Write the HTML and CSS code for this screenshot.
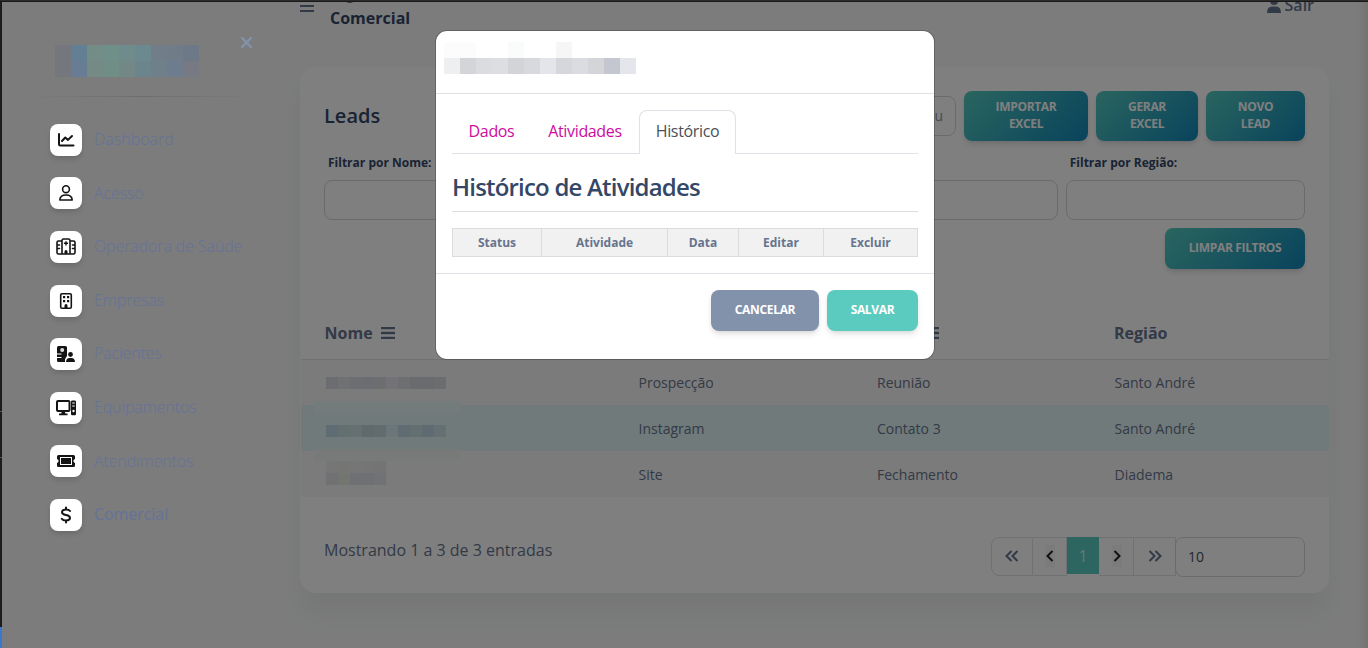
FILE: index.html
```html
<!DOCTYPE html>
<html lang="pt-BR">
<head>
<meta charset="utf-8">
<title>Leads</title>
<link rel="stylesheet" href="styles.css">
</head>
<body>
<div class="app">
  <aside class="sidebar">
    <div class="brand">
      <div class="logo">
        <i style="background:#75777f"></i><i style="background:#637f94"></i><i style="background:#738c86"></i><i style="background:#6f9088"></i><i style="background:#6f8b8c"></i><i style="background:#6c898f"></i><i style="background:#717e8a"></i><i style="background:#717c89"></i><i style="background:#6e7988"></i>
        <i style="background:#75777f"></i><i style="background:#687c94"></i><i style="background:#758985"></i><i style="background:#708d86"></i><i style="background:#728786"></i><i style="background:#6c858c"></i><i style="background:#70808a"></i><i style="background:#6d7d8d"></i><i style="background:#777983"></i>
      </div>
      <svg class="close" viewBox="0 0 10 10"><path d="M1 1l8 8M9 1l-8 8"/></svg>
    </div>
    <div class="divider"></div>
    <nav class="menu">
      <a class="item"><span class="tile"><svg viewBox="0 0 20 20"><path class="ln thick" d="M3 4v10.200q0 1.300 1.300 1.300H17.500M6 11l3.300-3.500 2.700 2.400L16 6"/></svg></span><span class="label">Dashboard</span></a>
      <a class="item"><span class="tile"><svg viewBox="0 0 20 20"><circle class="ln" cx="10" cy="6.200" r="3.400"/><path class="ln" d="M3.800 17q.2-5 6.200-5t6.200 5z"/></svg></span><span class="label">Acesso</span></a>
      <a class="item"><span class="tile"><svg viewBox="0 0 20 20"><path class="ln" d="M6 17V3.500Q6 2 7.500 2h5Q14 2 14 3.500V17zM6 4H2.500Q1 4 1 5.500v10Q1 17 2.500 17H6M14 4h3.500Q19 4 19 5.500v10q0 1.500-1.500 1.500H14M1 8h2.500M1 11.500h2.500M16.500 8H19M16.500 11.500H19"/><path d="M8.500 17v-2.500q0-1.500 1.500-1.500t1.500 1.500V17zM9.300 4.200h1.400v1.400h1.400V7h-1.400v1.400H9.300V7H7.900V5.600h1.400z"/></svg></span><span class="label">Operadora de Saúde</span></a>
      <a class="item"><span class="tile"><svg viewBox="0 0 20 20"><rect class="ln" x="4.700" y="2.700" width="10.600" height="14.600" rx="1.300"/><path d="M7 5h2.200v2.200H7zM11 5h2.200v2.200H11zM7 9h2.200v2.200H7zM11 9h2.200v2.200H11zM8.500 17.500v-3q0-1.500 1.500-1.500t1.500 1.500v3z"/></svg></span><span class="label">Empresas</span></a>
      <a class="item"><span class="tile"><svg viewBox="0 0 20 20"><path d="M2.500 2h7Q11 2 11 3.500V12q-1.500 1.500-2 3.500v2.500H2.500Q1 18 1 16.500V14h4.500v-1H1v-2.500h4.500v-1H1v-6Q1 2 2.500 2z"/><circle cx="6.200" cy="6" r="2" fill="#ddd"/><circle cx="14.500" cy="10.500" r="2.400"/><path d="M10 18q.3-4 3.500-4h2q3.300 0 3.500 4z"/></svg></span><span class="label">Pacientes</span></a>
      <a class="item"><span class="tile"><svg viewBox="0 0 20 20"><rect class="ln thick" x="1" y="3" width="12.500" height="10" rx="1"/><path d="M5.800 13.500h3l.5 2h2.200v1.800H3v-1.800h2.200z"/><rect x="15" y="2.500" width="5" height="14.800" rx="1.200"/><path d="M16.200 5h2.600M16.200 8h2.600" stroke="#fff" stroke-width="1"/><circle cx="17.500" cy="13" r="1.200" fill="#fff"/></svg></span><span class="label">Equipamentos</span></a>
      <a class="item"><span class="tile"><svg viewBox="0 0 20 20"><path d="M2.500 4h15Q19 4 19 5.500V8q-1.600.5-1.600 2t1.600 2v2.500q0 1.500-1.500 1.500h-15Q1 16 1 14.500V12q1.600-.5 1.600-2T1 8V5.500Q1 4 2.500 4z"/><rect x="4.500" y="6.500" width="11" height="7" fill="none" stroke="#fff"/></svg></span><span class="label">Atendimentos</span></a>
      <a class="item active"><span class="tile"><svg viewBox="0 0 20 20"><path class="ln thick" d="M14 6Q13 4.500 10 4.500q-4 0-4 2.800Q6 9.300 10 10q4 .7 4 3t-4 2.500q-3.200 0-4.200-1.700M10 2.500v2M10 15.500v2"/></svg></span><span class="label">Comercial</span></a>
    </nav>
  </aside>

  <main class="content">
    <header class="topbar">
      <svg class="burger" viewBox="0 0 14 12"><path d="M0 1h14M0 6h14M0 11h14"/></svg>
      <div class="crumbs"><span>Páginas</span><b>Comercial</b></div>
      <div class="logout"><svg viewBox="0 0 14 16"><circle cx="7" cy="4" r="4"/><path d="M0 16q0-6.500 5-6.500h4q5 0 5 6.500z"/></svg>Sair</div>
    </header>

    <section class="card">
      <div class="card-head">
        <h5>Leads</h5>
        <div class="search">Digite seu</div>
        <button class="btn grad import">IMPORTAR<br>EXCEL</button>
        <button class="btn grad gen">GERAR<br>EXCEL</button>
        <button class="btn grad new">NOVO<br>LEAD</button>
      </div>
      <div class="filters">
        <label>Filtrar por Nome:<span class="field"></span></label>
        <label>Filtrar por Origem:<span class="field"></span></label>
        <label>Filtrar por Status:<span class="field"></span></label>
        <label>Filtrar por Região:<span class="field"></span></label>
      </div>
      <button class="btn grad clear">LIMPAR FILTROS</button>

      <div class="table">
        <div class="row thead"><span>Nome <svg class="sort" viewBox="0 0 14 12"><path d="M0 1h14M0 6h14M0 11h14"/></svg></span><span>Origem</span><span>Status<svg class="sort st" viewBox="0 0 14 12"><path d="M0 1h14M0 6h14M0 11h14"/></svg></span><span>Região</span></div>
        <div class="row odd"><span class="mask m1"><i style="background:#6c6d70"></i><i style="background:#707173"></i><i style="background:#6d6e72"></i><i style="background:#6b6d73"></i><i style="background:#6d6e70"></i><i style="background:#737377"></i><i style="background:#6d6f71"></i><i style="background:#696b6e"></i><i style="background:#696b6f"></i><i style="background:#6b6d6f"></i></span><span>Prospecção</span><span>Reunião</span><span>Santo André</span></div>
        <div class="row sel"><span class="mask m2"><i style="background:#606c73"></i><i style="background:#63706f"></i><i style="background:#657171"></i><i style="background:#606a6c"></i><i style="background:#626c6f"></i><i style="background:#6a7678"></i><i style="background:#606b72"></i><i style="background:#637071"></i><i style="background:#606a72"></i><i style="background:#647071"></i></span><span>Instagram</span><span>Contato 3</span><span>Santo André</span></div>
        <div class="row odd"><span class="mask m3"><i style="background:#767676"></i><i style="background:#757674"></i><i style="background:#757675"></i><i style="background:#737674"></i><i style="background:#747474"></i><i style="background:#717174"></i><i style="background:#727570"></i><i style="background:#6e7073"></i><i style="background:#6e7074"></i><i style="background:#717276"></i></span><span>Site</span><span>Fechamento</span><span>Diadema</span></div>
      </div>

      <div class="card-foot">
        <span class="info">Mostrando 1 a 3 de 3 entradas</span>
        <div class="pages">
          <span class="pg first"><svg viewBox="0 0 14 12"><path d="M6.500 1l-5 5 5 5M12.500 1l-5 5 5 5"/></svg></span>
          <span class="pg step"><em><svg viewBox="0 0 8 12"><path d="M6.500 1l-5 5 5 5"/></svg></em></span>
          <span class="pg now">1</span>
          <span class="pg step next"><em><svg viewBox="0 0 8 12"><path d="M1.500 1l5 5-5 5"/></svg></em></span>
          <span class="pg last"><svg viewBox="0 0 14 12"><path d="M1.500 1l5 5-5 5M7.500 1l5 5-5 5"/></svg></span>
          <span class="size">10</span>
        </div>
      </div>
    </section>
  </main>

  <div class="backdrop"></div>

  <div class="modal">
    <div class="modal-head">
      <div class="name">
        <i style="background:#fcfcfd"></i><i style="background:#fcfcfd"></i><i></i><i></i><i style="background:#fafcfc"></i><i></i><i></i><i style="background:#f6f6f7"></i><i></i><i></i><i></i><i></i>
        <i style="background:#eeeff1"></i><i style="background:#d4d5d9"></i><i style="background:#dbdce0"></i><i style="background:#dddee2"></i><i style="background:#d3d4d8"></i><i style="background:#d8d9dd"></i><i style="background:#e4e5ea"></i><i style="background:#d6d7db"></i><i style="background:#dbdce1"></i><i style="background:#d3d5d9"></i><i style="background:#c4c7d0"></i><i style="background:#e5e6eb"></i>
      </div>
    </div>
    <div class="modal-body">
      <div class="tabs"><a class="t1">Dados</a><a class="t2">Atividades</a><a class="t3 on">Histórico</a></div>
      <h4>Histórico de Atividades</h4>
      <div class="hist"><span>Status</span><span>Atividade</span><span>Data</span><span>Editar</span><span>Excluir</span></div>
    </div>
    <div class="modal-foot">
      <button class="btn cancel">CANCELAR</button>
      <button class="btn save">SALVAR</button>
    </div>
  </div>
  <div class="edge-top"></div>
  <div class="edge-left"></div>
</div>
</body>
</html>
```

FILE: styles.css
```css
* { box-sizing: border-box; }
body {
  margin: 0;
  background: #f8f9fa;
  font-family: "Open Sans", sans-serif;
  font-size: 16px;
  color: #67748e;
}
.app {
  position: relative;
  display: flex;
  width: 1368px;
  height: 648px;
  overflow: hidden;
}
.backdrop { position: absolute; inset: 0; background: rgba(0, 0, 0, .5); box-shadow: inset -14px 0 12px -12px rgba(0, 0, 0, .12); z-index: 1; }
.edge-top { position: absolute; left: 0; right: 0; top: 0; height: 2px; background: linear-gradient(#2c2c2c 50%, #191919 50%); z-index: 5; }
.edge-left { position: absolute; left: 0; top: 2px; bottom: 0; width: 2px; background: linear-gradient(#1c1c1c 409px, #555 409px 410px, #1c1c1c 410px 455px, #555 455px 456px, #1c1c1c 456px 625px, #3a78d0 625px); z-index: 5; }

/* sidebar */
.sidebar { position: relative; z-index: 2; width: 284px; flex: none; }
.brand { display: flex; height: 96px; padding: 45px 0 0 55px; }
.logo { display: grid; grid-template-columns: repeat(9, 16px); grid-auto-rows: 16px; height: 32px; }
.close { width: 11px; height: 11px; margin: -8px 0 0 42px; fill: none; stroke: #8392ab; stroke-width: 2; stroke-linecap: round; }
.divider { height: 1px; margin: 0 26px; background: linear-gradient(90deg, transparent, #6e6e6e 50%, transparent); }
.menu { padding: 16px 32px 0 34px; }
.item { display: flex; align-items: center; height: 53.600px; padding-left: 16px; }
.tile { display: flex; align-items: center; justify-content: center; width: 32px; height: 32px; margin-right: 12px; border-radius: 8px; background: #fff; box-shadow: 0 4px 6px -1px rgba(20,20,20,.12), 0 2px 4px -1px rgba(20,20,20,.07); }
.tile svg { width: 20px; height: 20px; fill: #141414; }
.tile .ln { fill: none; stroke: #141414; stroke-width: 1.600; stroke-linecap: round; stroke-linejoin: round; }
.tile .thick { stroke-width: 2; }
.label { color: #647299; font-weight: 300; line-height: 24px; margin-top: -1.600px; letter-spacing: -.12px; }
.item:first-child .label { letter-spacing: 0; }
.active .label { font-weight: 400; letter-spacing: -.06px; }

/* page behind the dialog */
.content { flex: 1; padding: 0 39px 0 16px; }
.topbar { display: flex; height: 67px; }
.burger { width: 14px; height: 12px; fill: none; stroke: #67748e; stroke-width: 2; }
.crumbs { display: flex; flex-direction: column; margin: -17px 0 0 16px; color: #344767; line-height: 22px; }
.crumbs span { font-size: 14px; height: 24px; color: #67748e; }
.crumbs b { font-weight: 700; }
.logout { display: flex; margin: -7px 15px 0 auto; font-weight: 600; line-height: 24px; }
.logout svg { width: 14px; height: 16px; margin: 4px 4px 0 0; fill: #67748e; }
.card { height: 526px; padding-top: 24px; background: #fff; border-radius: 16px; box-shadow: 0 20px 27px rgba(0,0,0,.05); }
.card-head { display: flex; align-items: center; gap: 8px; height: 50px; padding: 0 24px; }
h5 { margin: -2px 0 0; font-size: 20px; font-weight: 600; color: #344767; flex: 1; }
.search, .field, .size { border: 1px solid #d2d6da; border-radius: 8px; background: #fff; height: 40px; }
.search { width: 200px; padding: 0 12px; text-align: right; line-height: 38px; font-size: 14px; color: #8f959e; }
.btn { border: 0; border-radius: 8px; padding: 0 0 2px; color: #fff; font: 700 12px/17px "Open Sans", sans-serif; letter-spacing: -.33px; box-shadow: 0 4px 7px -1px rgba(0,0,0,.11), 0 2px 4px -1px rgba(0,0,0,.07); }
.grad { height: 50px; background: linear-gradient(135deg, #55cabf, #1287b9); }
.import { width: 124px; }
.gen { width: 102px; }
.new { width: 99px; }
.filters { display: grid; grid-template-columns: repeat(4, 1fr); gap: 8px; padding: 12px 24px 0; }
.filters label { display: flex; flex-direction: column; font-size: 12px; font-weight: 700; line-height: 20px; color: #344767; text-indent: 4px; }
.field { margin-top: 7px; }
.clear { display: block; width: 140px; height: 41px; margin: 8px 24px 0 auto; }
.table { margin: 38px 0 0 1px; }
.row { display: grid; grid-template-columns: 313.500px 238.500px 237.500px 1fr; align-items: center; height: 46px; padding: 0 0 0 24px; font-size: 14px; }
.thead { height: 53px; padding: 0 0 0 23.500px; border-bottom: 1px solid #e4e5e8; font-size: 16px; font-weight: 700; }
.odd { background: #f7f7f7; }
.thead + .odd { height: 45px; }
.sel { background: #e0f4f5; }
.sort { width: 14px; height: 12px; margin-left: 4px; fill: none; stroke: #67748e; stroke-width: 2.300; }
.st { margin-left: -2px; }
.mask { position: relative; z-index: 2; display: grid; grid-template-columns: repeat(10, 12px); grid-auto-rows: 12px; margin-left: 1px; }
.m1 { margin-top: 1px; }
.m2 { margin-top: 6px; }
.m2::before, .m2::after { content: ""; position: absolute; left: -12px; width: 145px; height: 12px; background: #747b7b; }
.m2::before { top: -24px; }
.m2::after { top: 24px; background: #777a78; }
.m3 { grid-template-columns: repeat(5, 12px); margin-top: -2px; }
.card-foot { display: flex; justify-content: space-between; padding: 40px 24px 0; }
.info { line-height: 26px; }
.pages { display: flex; align-items: flex-start; }
.pg { display: flex; align-items: center; justify-content: center; height: 39px; border: 1px solid #dee2e6; }
.pg svg { height: 12px; fill: none; stroke: #67748e; stroke-width: 2; }
.first { width: 42px; border-radius: 8px 0 0 8px; }
.last { width: 42px; border-left: 0; }
.step { width: 34px; border-left: 0; }
.next { width: 35px; padding-left: 1px; }
.pg em { display: flex; align-items: center; justify-content: center; width: 10px; height: 22px; margin-top: -1px; background: #f6f6f6; }
.first svg, .last svg { margin-top: -1px; }
.step svg { stroke: #222; }
.now { width: 32px; height: 37px; border: 0; background: #5bcbc0; color: #fff; font-weight: 300; }
.size { width: 130px; margin-left: -1px; padding-left: 12px; line-height: 38px; font-size: 14px; color: #495057; }

/* dialog */
.modal { position: absolute; z-index: 3; left: 435px; top: 30px; width: 500px; height: 330px; border: 1px solid rgba(0,0,0,.2); border-radius: 12px; background: #fff; background-clip: padding-box; }
.modal-head { height: 63px; padding: 11px 8px; border-bottom: 1px solid #dee2e6; }
.name { display: grid; grid-template-columns: repeat(12, 16px); grid-auto-rows: 16px; }
.modal-body { height: 180px; padding: 16px; border-bottom: 1px solid #dee2e6; }
.tabs { display: flex; height: 44px; border-bottom: 1px solid #dee2e6; }
.tabs a { height: 44px; padding: 8px 0 0 0; text-align: center; line-height: 24px; color: #cb0c9f; border: 1px solid transparent; letter-spacing: -.35px; }
.t1 { width: 79px; }
.t2 { width: 108px; }
.tabs .on { width: 97px; color: #495057; background: #fff; border-color: #dee2e6; border-bottom: 0; border-radius: 8px 8px 0 0; }
h4 { margin: 0 0 16px; height: 58px; padding-top: 16px; border-bottom: 1px solid #dcdde0; font-size: 24px; line-height: 33px; font-weight: 600; letter-spacing: -.8px; color: #344767; }
.hist { display: grid; grid-template-columns: 89px 126px 71px 85px 94px; height: 29px; border: 1px solid #dcdcdc; border-right: 0; background: #f1f1f1; font-size: 12px; font-weight: 700; line-height: 27px; text-align: center; }
.hist span { border-right: 1px solid #dcdcdc; }
.modal-foot { display: flex; justify-content: flex-end; gap: 8px; padding: 16px; }
.modal-foot .btn { height: 41px; }
.cancel { width: 108px; background: #8392ab; }
.save { width: 91px; background: #5bcbc0; }
```
